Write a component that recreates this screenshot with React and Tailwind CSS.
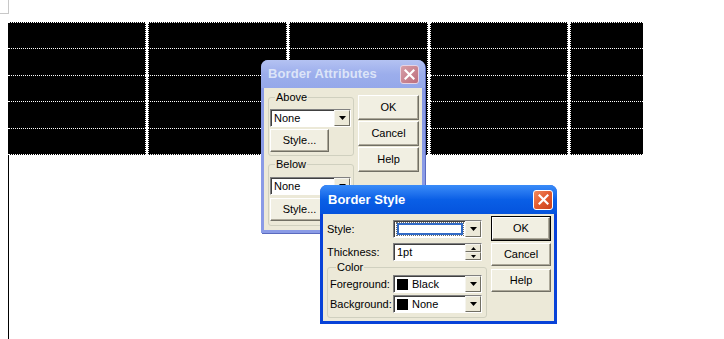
import React from 'react';

const rows = [26, 27, 26, 27, 27];
const cols = [0, 1, 2, 3, 4];

function Arrow() {
  return (
    <svg width="7" height="4" viewBox="0 0 7 4">
      <path d="M0 0h7L3.5 4z" fill="#000" />
    </svg>
  );
}

function Btn({ children, className = '', isDefault = false }) {
  return (
    <div
      className={
        'flex items-center justify-center bg-[#F1EFE2] border border-t-white border-l-white border-r-[#716F64] border-b-[#716F64] shadow-[inset_-1px_-1px_0_#ACA899] text-[11px] text-black ' +
        (isDefault ? 'outline outline-1 outline-black ' : '') +
        className
      }
    >
      {children}
    </div>
  );
}

function DropBtn() {
  return (
    <div className="w-[16px] h-full flex items-center justify-center bg-[#ECE9D8] border border-t-[#F5F4EE] border-l-[#F5F4EE] border-r-[#716F64] border-b-[#716F64]">
      <Arrow />
    </div>
  );
}

function Combo({ children, className = '' }) {
  return (
    <div
      className={
        'flex items-stretch h-[18px] bg-white border border-t-[#808080] border-l-[#808080] border-b-white border-r-white shadow-[inset_1px_1px_0_#404040] ' +
        className
      }
    >
      <div className="flex-1 flex items-center pl-[3px] text-[11px] text-black leading-none">{children}</div>
      <DropBtn />
    </div>
  );
}

function CloseX() {
  return (
    <svg width="11" height="11" viewBox="0 0 11 11">
      <path d="M1.5 1.5l8 8M9.5 1.5l-8 8" stroke="#fff" strokeWidth="2.2" strokeLinecap="square" />
    </svg>
  );
}

function BorderAttributes() {
  return (
    <div className="absolute left-[261px] top-[60px] w-[164px] h-[173px] flex flex-col rounded-t-[7px] bg-[#8A9BE6] px-[3px] pb-[3px] shadow-[1px_1px_0_#5A6ABF]">
      {/* title bar */}
      <div className="h-[28px] flex items-center justify-between -mx-[3px] pl-[7px] pr-[6px] rounded-t-[7px] bg-gradient-to-b from-[#B4C2F2] via-[#9CAEEC] to-[#95A8EA]">
        <span className="text-[13px] font-bold text-[#DCE4F8] tracking-[0.1px]">Border Attributes</span>
        <div className="w-[19px] h-[19px] rounded-[3px] border border-[#E6D4E4] bg-gradient-to-br from-[#D79EA8] to-[#BC6E7D] flex items-center justify-center">
          <CloseX />
        </div>
      </div>
      {/* body */}
      <div className="flex-1 bg-[#ECE9D8] flex pl-[4px] gap-[4px]">
        <div className="w-[86px] flex flex-col">
          <fieldset className="mt-[3px] border border-[#D0D0BF] rounded-[3px] pl-px pr-[2px] pb-[1px] h-[65px]">
            <legend className="ml-[5px] px-[1px] text-[11px] leading-[13px] text-black">Above</legend>
            <Combo className="mt-[5px] w-[81px]">None</Combo>
            <Btn className="mt-[2px] w-[59px] h-[23px]">Style...</Btn>
          </fieldset>
          <fieldset className="mt-[2px] border border-[#D0D0BF] rounded-[3px] pl-px pr-[2px] pb-[1px] h-[68px]">
            <legend className="ml-[5px] px-[1px] text-[11px] leading-[13px] text-black">Below</legend>
            <Combo className="mt-[6px] w-[81px]">None</Combo>
            <Btn className="mt-[3px] w-[59px] h-[23px]">Style...</Btn>
          </fieldset>
        </div>
        <div className="w-[61px] flex flex-col gap-[1px] pt-[7px]">
          <Btn className="h-[25px]">OK</Btn>
          <Btn className="h-[25px]">Cancel</Btn>
          <Btn className="h-[25px]">Help</Btn>
        </div>
      </div>
    </div>
  );
}

function BorderStyle() {
  return (
    <div className="absolute left-[320px] top-[185px] w-[237px] h-[139px] flex flex-col rounded-t-[7px] bg-[#0842D8] px-[3px] pb-[3px]">
      <div className="h-[29px] flex items-center justify-between -mx-[3px] pl-[8px] pr-[4px] rounded-t-[7px] bg-gradient-to-b from-[#3A8CF8] via-[#0A5FE6] to-[#0553DD]">
        <span className="text-[13px] font-bold text-white">Border Style</span>
        <div className="w-[20px] h-[20px] rounded-[3px] border border-white bg-gradient-to-br from-[#F08A5E] via-[#E25A2E] to-[#C8401C] flex items-center justify-center">
          <CloseX />
        </div>
      </div>
      <div className="flex-1 bg-[#ECE9D8] flex pl-[4px] gap-[4px]">
        <div className="w-[160px] flex flex-col">
          <div className="mt-[6px] flex items-center h-[18px]">
            <span className="w-[66px] text-[11px] text-black">Style:</span>
            <div className="w-[89px] h-[18px] flex items-stretch bg-white border border-t-[#808080] border-l-[#808080] border-b-white border-r-white shadow-[inset_1px_1px_0_#404040]">
              <div className="flex-1 flex items-center pl-[3px] pr-[2px]">
                <div className="w-full h-[12px] border-2 border-[#316AC5] bg-white outline outline-1 outline-dotted outline-[#6B6B6B]" />
              </div>
              <DropBtn />
            </div>
          </div>
          <div className="mt-[5px] flex items-center h-[18px]">
            <span className="w-[66px] text-[11px] text-black">Thickness:</span>
            <div className="w-[89px] h-[18px] flex items-stretch bg-white border border-t-[#808080] border-l-[#808080] border-b-white border-r-white shadow-[inset_1px_1px_0_#404040]">
              <div className="flex-1 flex items-center pl-[3px] text-[11px] text-black">1pt</div>
              <div className="w-[16px] flex flex-col">
                <div className="flex-1 flex items-center justify-center bg-[#ECE9D8] border border-t-[#F5F4EE] border-l-[#F5F4EE] border-r-[#716F64] border-b-[#716F64]">
                  <svg width="5" height="3" viewBox="0 0 5 3"><path d="M0 3h5L2.5 0z" fill="#000" /></svg>
                </div>
                <div className="flex-1 flex items-center justify-center bg-[#ECE9D8] border border-t-[#F5F4EE] border-l-[#F5F4EE] border-r-[#716F64] border-b-[#716F64]">
                  <svg width="5" height="3" viewBox="0 0 5 3"><path d="M0 0h5L2.5 3z" fill="#000" /></svg>
                </div>
              </div>
            </div>
          </div>
          <fieldset className="border border-[#D0D0BF] rounded-[3px] pl-[2px] pr-[4px] pb-[4px]">
            <legend className="ml-[6px] px-[1px] text-[11px] leading-[13px] text-black">Color</legend>
            <div className="mt-[1px] flex items-center">
              <span className="w-[63px] text-[11px] text-black">Foreground:</span>
              <Combo className="w-[89px]">
                <span className="w-[11px] h-[11px] bg-black mr-[4px]" />Black
              </Combo>
            </div>
            <div className="mt-[2px] flex items-center">
              <span className="w-[63px] text-[11px] text-black">Background:</span>
              <Combo className="w-[89px]">
                <span className="w-[11px] h-[11px] bg-black mr-[4px]" />None
              </Combo>
            </div>
          </fieldset>
        </div>
        <div className="w-[60px] flex flex-col gap-[3px] pt-[3px]">
          <Btn isDefault className="h-[23px] mx-[1px]">OK</Btn>
          <Btn className="h-[23px]">Cancel</Btn>
          <Btn className="h-[23px]">Help</Btn>
        </div>
      </div>
    </div>
  );
}

export default function App() {
  return (
    <div className="relative w-[724px] h-[339px] bg-white overflow-hidden [font-family:'Liberation_Sans',Arial,sans-serif]">
      {/* page corner mark */}
      <div className="h-[22px]">
        <div className="w-[9px] h-[14px] border-r border-b border-[#C8C8C8]" />
      </div>

      {/* black table */}
      <div className="ml-[8px] w-[635px] grid grid-cols-[138px_139px_139px_138px_73px] gap-x-[2px] bg-white">
        {rows.map((h, r) =>
          cols.map((c) => (
            <div
              key={r + '-' + c}
              style={{ height: h }}
              className={
                'bg-black border-t border-dotted border-white ' +
                (c > 0 ? 'border-l ' : '') +
                (c < 4 ? 'border-r ' : '') +
                (r === 4 ? 'border-b ' : '')
              }
            />
          ))
        )}
      </div>

      {/* page margin line */}
      <div className="ml-[8px] w-px h-[190px] bg-black" />

      <BorderAttributes />
      <BorderStyle />
    </div>
  );
}
